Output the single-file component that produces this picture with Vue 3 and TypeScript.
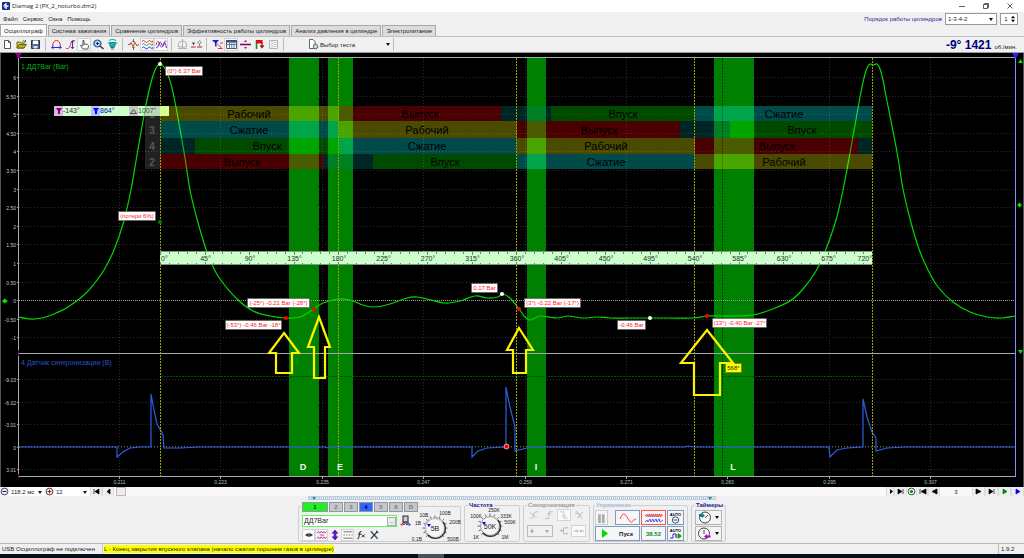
<script setup lang="ts">
import { ref } from 'vue'

interface Stroke { d: string; s?: string; f?: string; w?: number }
interface Tool { label: string; on?: boolean; art: Stroke[] }
interface Cell { kind: string; to: number; text?: string; at?: number }
interface Note { x: number; y: number; w: number; text: string }
type Pt = [number, number]

const menu = ['Файл', 'Сервис', 'Окна', 'Помощь']
const tabs = [
  'Осциллограф',
  'Система зажигания',
  'Сравнение цилиндров',
  'Эффективность работы цилиндров',
  'Анализ давления в цилиндре',
  'Электропитание',
]
const activeTab = ref(0)
const order = ref('1-3-4-2')
const cylinder = ref(1)
const channelName = ref('ДД7Bar')

const toolGroups: Tool[][] = [
  [
    { label: 'Новый', art: [{ d: 'M2.5 1.5H6.5L8.5 3.5V9.5H2.5ZM6.5 1.5V3.5H8.5', s: '#444', f: '#fff' }] },
    { label: 'Открыть', art: [{ d: 'M1 9V3H4L5 4H8V9Z', s: '#6a5a10', f: '#e8d040' }, { d: 'M1 9L3 5.5H10.5L8 9Z', s: '#5a5a10', f: '#b8b020' }, { d: 'M6 2.5Q8 .5 9.5 3M9.5 1V3H8', s: '#208020' }] },
    { label: 'Сохранить', art: [{ d: 'M1.5 1.5H9.5V9.5H1.5Z', s: '#223', f: '#5a6a9a' }, { d: 'M3 1.5H8V5H3Z', f: '#fff' }, { d: 'M3.5 7H7.5V9.5H3.5Z', f: '#dde' }] },
  ],
  [
    { label: 'По горизонтали', art: [{ d: 'M1.5 7.5Q2 1.500 5.500 1.500T9.500 7.500', s: '#f22', w: 1 }, { d: 'M.5 8.500H10.500M2.500 7L.8 8.500L2.500 10M8.500 7L10.200 8.500L8.500 10', s: '#22f', w: 1 }] },
    { label: 'По вертикали', art: [{ d: 'M1 9.5H3Q5 9 5.5 5.5T8 1.5H10', s: '#f22' }, { d: 'M7.5 2V9.5M6 8L7.5 9.7L9 8M6 3.5L7.5 1.8L9 3.5', s: '#22c' }] },
    { label: 'Рука', on: true, art: [{ d: 'M4 10L1.5 6.5L2.5 6L4 7V1.5H5V5L8.5 5.5L9.5 6.5L9 10Z', s: '#444', f: '#fff' }] },
    { label: 'Масштаб', art: [{ d: 'M4.5 1A3.5 3.5 0 1 1 4.4 1Z', s: '#357', f: '#a8d8ff', w: 1.2 }, { d: 'M7 7L10.5 10', s: '#335', w: 1.6 }, { d: 'M3 4.5H6M4.5 3V6', s: '#118' }] },
    { label: 'Лампа', art: [{ d: 'M2.5 3.500H8.500L8 7L7 8H4L3 7Z', f: '#18b4b8', s: '#088' }, { d: 'M2 1.500Q5.500 -.5 9 1.500M.5 4H2M9 4H10.500', s: '#0bb', w: 1.2 }, { d: 'M3.500 8.500H7.500M4 10H7', s: '#556' }] },
  ],
  [
    { label: 'Центрировать', art: [{ d: 'M0 5.5H2L3 3.5L5 7.5L7 3.5L9 7L10 5.5H11', s: '#d22' }, { d: 'M5.5 0V3M4.3 2L5.5 3.2L6.7 2M5.5 11V8M4.3 9L5.5 7.8L6.7 9', s: '#183' }] },
    { label: 'Раздельно', on: true, art: [{ d: 'M0 2.5Q1.5 .5 3 2.5T6 2.5T9 2.5T11 1.5', s: '#d22' }, { d: 'M0 5.5Q1.5 3.5 3 5.5T6 5.5T9 5.5T11 4.5', s: '#292' }, { d: 'M0 9Q1.5 7 3 9T6 9T9 9T11 8', s: '#22f' }] },
    { label: 'Вместе', on: true, art: [{ d: 'M0 6Q1.500 -1 3.500 5T7 6T10.500 2', s: '#d22' }, { d: 'M0 9Q2 9 3 5T5.500 5T8 5T10.500 9', s: '#22f' }] },
  ],
  [
    { label: 'Взвешивание', art: [{ d: 'M1.5 8V5Q1.5 2 5.5 2T9.5 5V8ZM5.5 0V9M1 9.5H10', s: '#aaa' }] },
    { label: 'Разность', art: [{ d: 'M0 8H4.500M6 8H11', s: '#a22', w: 1.2 }, { d: 'M1 4H4M2.500 6V4', s: '#333' }, { d: 'M8.500 2A1.500 1.500 0 1 1 8.400 2ZM8.500 5V7', s: '#777' }] },
  ],
  [
    { label: 'Фильтр', art: [{ d: 'M0 1H7L4.5 4V8L3 7V4Z', f: '#22c' }, { d: 'M5 4.5L10 9.5M8 4H11M6 9.5H10.5', s: '#d22' }] },
    { label: 'Таблица', on: true, art: [{ d: 'M.5 1.5H10.5V9.5H.5Z', s: '#346', f: '#fff' }, { d: 'M.5 2.5H10.5', s: '#347', w: 2 }, { d: 'M3.5 2V9.5M5.8 2V9.5M8 2V9.5M.5 5.5H10.5', s: '#579' }] },
    { label: 'Линия', art: [{ d: 'M0 5.5H11', s: '#808', w: 1.6 }, { d: 'M5.5 1L7 3H4ZM5.5 10L7 8H4Z', f: '#a22' }] },
    { label: 'Флаг', art: [{ d: 'M2.5 1V10', s: '#181', w: 1.5 }, { d: 'M2 1H8.5V4.5H2Z', f: '#d11' }, { d: 'M8 3V8M6.3 6.5L8 8.5L9.7 6.5', s: '#a11', w: 1.3 }] },
    { label: 'Отчёт', art: [{ d: 'M1.5 1.5H9.5V9.5H1.5Z', s: '#aaa', f: '#f8f8f8' }, { d: 'M4 1.5V9.5M5.5 3.5H8.5M5.5 5.5H8.5M5.5 7.5H8.5', s: '#bbb' }] },
  ],
]

const channelTools: Tool[] = [
  { label: 'Показать', on: true, art: [{ d: 'M1 5.5Q5.5 1.5 10 5.5Q5.5 9.5 1 5.5Z', f: '#333' }, { d: 'M5.5 4V7', s: '#888' }] },
  { label: 'Сгладить', on: true, art: [{ d: 'M0 3.5L1.500 1.5L3 3.5L4.500 1.5L6 3.5L7.500 1.5L9 3.500L10.500 1.500M0 9.5L1.500 7.5L3 9.5L4.500 7.5L6 9.5L7.500 7.5L9 9.500L10.500 7.500', s: '#a1a' }, { d: 'M3 5.5H8', s: '#d22' }] },
  { label: 'Инверсия', art: [{ d: 'M5.5 0L8.5 3.5H6.5V7.5H8.5L5.5 11L2.5 7.5H4.5V3.5H2.5Z', f: '#22e', s: '#918' }] },
  { label: 'Линии', on: true, art: [{ d: 'M.5 2H10.500M.5 9H10.500', s: '#555' }, { d: 'M.5 5.5H2M3.500 5.5H5M6.500 5.5H8M9.500 5.500H10.500', s: '#555' }] },
  { label: 'Функция', art: [{ d: 'M6 1.5Q4 1 3.8 4L3 9Q2.5 10 1.5 9.5M2.5 4.5H6M6.5 5L9.5 8M9.5 5L6.5 8', s: '#222', w: 1.1 }] },
  { label: 'Настройка', art: [{ d: 'M2 1.5L9.5 9.5', s: '#456', w: 1.6 }, { d: 'M9.500 1.5L2 9.5M8 1L10 3', s: '#234', w: 1.3 }] },
]

const syncTools: Tool[] = [
  { label: 'Синхронизация по уровню', art: [{ d: 'M1 9H3Q5 9 5 5.5T8 2H10M1 3L8 8', s: '#bbb' }] },
  { label: 'По фронту', art: [{ d: 'M1 9.5H5.5V2H10M3.5 5L5.5 3L7.5 5', s: '#bbb' }] },
  { label: 'По спаду', on: true, art: [{ d: 'M1 2H5.5V9H10M3.5 5.5L5.5 8L7.5 5.5', s: '#c4c4c4' }] },
  { label: 'Отключить', art: [{ d: 'M1 4H5L9 9.5M9.5 2L4 9M2 1L6 5', s: '#b4b4b4' }] },
]
const syncExtra: Tool[] = [
  { label: 'Возврат', art: [{ d: 'M10 2H5V5H1.5M3 3.5L1.5 5L3 6.5M5 5V8.5H10', s: '#b4b4b4' }] },
  { label: 'Сжать', on: true, art: [{ d: 'M0 5.5H4.5M3 4L4.5 5.5L3 7M11 5.5H6.5M8 4L6.5 5.5L8 7', s: '#aaa' }] },
]

/* Catmull-Rom interpolation converted to cubic segments */
function smooth(p: Pt[]): string {
  let d = `M${p[0][0]} ${p[0][1]}`
  for (let i = 0; i < p.length - 1; i++) {
    const a = p[Math.max(0, i - 1)], b = p[i], c = p[i + 1], e = p[Math.min(p.length - 1, i + 2)]
    d += `C${b[0] + (c[0] - a[0]) / 6} ${b[1] + (c[1] - a[1]) / 6} ${c[0] - (e[0] - b[0]) / 6} ${c[1] - (e[1] - b[1]) / 6} ${c[0]} ${c[1]}`
  }
  return d
}

const pressure = smooth([
  [18, 317], [30, 319], [42, 318], [54, 314], [68, 307], [84, 295], [94, 284], [104, 270], [114, 250], [123, 224], [131, 190],
  [137, 155], [143, 121], [148, 95], [152, 79], [156, 68], [160, 64], [164, 67], [169, 78], [174, 97], [184, 152], [190, 190],
  [197, 219], [207, 252], [218, 276], [237, 299], [253, 311],
  [270, 316], [286, 318], [300, 317], [314, 309], [323, 303], [338, 299], [350, 300], [363, 305], [374, 307], [390, 304],
  [407, 298], [417, 297], [427, 299], [445, 303], [460, 301], [475, 296], [488, 298], [498, 297], [502, 294], [510, 298],
  [519, 309], [525, 317], [530, 320], [535, 318], [541, 316], [557, 318], [568, 316], [583, 318], [597, 317], [610, 318],
  [630, 318], [643, 318], [667, 318], [693, 318], [707, 316], [720, 316], [737, 316], [753, 315], [770, 310], [790, 301],
  [803, 289], [816, 271], [826, 249], [836, 220], [843, 190], [850, 153], [860, 97], [864, 78], [867, 68], [870, 64], [873, 65], [877, 64],
  [880, 69], [883, 80], [886, 96], [897, 152], [903, 189], [910, 219], [919, 249], [928, 270], [938, 287], [953, 302], [970, 312], [987, 317],
  [1002, 318], [1015, 316],
])
const sync =
  'M18 447H117V457L123 452L130 448L140 447H151V394L154 410L157 424L161 431L163 435L164 448H180L200 447H325L328 448L340 447H472V457L478 451L487 448L506 447V387L509 403L515 427V451L527 448L540 447H685L688 446L694 447H829L830 457L837 450L847 448L863 447V399L867 417L872 432L876 438V451L887 448L905 447H1015'

const scaleTop = ['6', '5.50', '5', '4.50', '4', '3.50', '3', '2.50', '2', '1.50', '1', '0.50', '0', '-0.50', '-1'].map(
  (text, i) => ({ text, y: Math.round(78 + i * 18.6) - 0.5 }),
)
const scaleBottom = ['-9.03', '-6.02', '-3.01', '0', '3.01'].map((text, i) => ({ text, y: Math.round(379 + i * 22.5) + 0.5 }))
const times = ['0.211', '0.223', '0.235', '0.247', '0.259', '0.271', '0.283', '0.295', '0.307'].map((text, i) => ({
  text,
  x: Math.round(119 + i * 101.4) + 0.5,
}))
const strokes = [160.5, 338.5, 516.5, 694.5, 872.5]
const bands = [
  { x: 289, w: 30, text: 'D', at: 303 },
  { x: 328, w: 25, text: 'E', at: 340 },
  { x: 527, w: 19, text: 'I', at: 536 },
  { x: 714, w: 40, text: 'L', at: 733 },
]

function row(y: number, h: number, n: string, cells: Cell[]) {
  let from = 161
  return { y, h, n, cells: cells.map((c) => { const o = { ...c, from }; from = c.to; return o }) }
}
const phases = [
  row(106, 15, '1', [
    { kind: 'power', to: 339, text: 'Рабочий', at: 249 }, { kind: 'exhaust', to: 501, text: 'Выпуск', at: 420 }, { kind: 'overlap', to: 551 },
    { kind: 'intake', to: 695, text: 'Впуск', at: 623 }, { kind: 'compress', to: 872, text: 'Сжатие', at: 784 }]),
  row(121, 17, '3', [
    { kind: 'compress', to: 339, text: 'Сжатие', at: 249 }, { kind: 'power', to: 517, text: 'Рабочий', at: 427 }, { kind: 'exhaust', to: 680, text: 'Выпуск', at: 599 },
    { kind: 'overlap', to: 730 }, { kind: 'intake', to: 872, text: 'Впуск', at: 802 }]),
  row(138, 16, '4', [
    { kind: 'overlap', to: 195 }, { kind: 'intake', to: 339, text: 'Впуск', at: 267 }, { kind: 'compress', to: 517, text: 'Сжатие', at: 427 },
    { kind: 'power', to: 695, text: 'Рабочий', at: 606 }, { kind: 'exhaust', to: 858, text: 'Выпуск', at: 777 }, { kind: 'overlap', to: 872 }]),
  row(154, 15, '2', [
    { kind: 'exhaust', to: 323, text: 'Выпуск', at: 242 }, { kind: 'overlap', to: 373 }, { kind: 'intake', to: 517, text: 'Впуск', at: 445 },
    { kind: 'compress', to: 695, text: 'Сжатие', at: 606 }, { kind: 'power', to: 872, text: 'Рабочий', at: 784 }]),
]
const degrees = Array.from({ length: 17 }, (_, i) => ({
  text: `${i * 45}°`,
  x: i === 0 ? 161 : i === 16 ? 872 : 161 + i * 44.5,
  anchor: i === 0 ? 'start' : i === 16 ? 'end' : 'middle',
}))
const rulerTicks = Array.from({ length: 80 }, (_, i) => ({ x: Math.round(160 + i * 8.9) + 0.5, h: i % 5 ? 2 : 3 }))

const notes: Note[] = [
  { x: 165, y: 66, w: 37, text: '(0°) 6.37 Bar' },
  { x: 118, y: 211, w: 37, text: '(потери 6%)' },
  { x: 247, y: 298, w: 62, text: '(-25°) -0.21 Bar (-28°)' },
  { x: 225, y: 320, w: 56, text: '(-53°) -0.46 Bar -18°' },
  { x: 471, y: 283, w: 26, text: '0.17 Bar' },
  { x: 524, y: 298, w: 56, text: '(3°) -0.22 Bar (-17°)' },
  { x: 617, y: 320, w: 28, text: '-0.46 Bar' },
  { x: 712, y: 318, w: 54, text: '(13°) -0.40 Bar -27°' },
]
const dots = [
  { x: 160, y: 64, c: '#fff' }, { x: 502, y: 294, c: '#fff' }, { x: 650, y: 318, c: '#fff' },
  { x: 286, y: 318, c: '#f00' }, { x: 314, y: 309, c: '#f00' }, { x: 519, y: 309, c: '#f00' }, { x: 707, y: 316, c: '#f00' },
  { x: 160, y: 222, c: '#008000' },
]
const arrows = [
  'M284 333L299 353H292V373H276V353H269Z',
  'M319 317L330 347H325V378H314V347H308Z',
  'M519 328L533 350H526V373H513V350H507Z',
  'M707 330L733 363H720V395H694V363H681Z',
]

const channels = [
  { n: '1', c: 'green' }, { n: '2', c: '' }, { n: '3', c: '' }, { n: '4', c: 'blue' }, { n: '5', c: '' }, { n: '6', c: '' }, { n: 'D', c: '' },
]
function dial(cx: number, cy: number): string {
  let d = ''
  for (let a = -225; a <= 45; a += 22.5) {
    const c = Math.cos((a * Math.PI) / 180), s = Math.sin((a * Math.PI) / 180)
    d += `M${(cx + c * 10).toFixed(1)} ${(cy + s * 10).toFixed(1)}L${(cx + c * 12.5).toFixed(1)} ${(cy + s * 12.5).toFixed(1)}`
  }
  return d
}
const knobs = {
  volt: { label: '5В', ticks: dial(21, 17), marks: [['0,1В', 3, 28], ['1В', 4, 12], ['10В', 10, 4], ['100В', 31, 2], ['200В', 41, 11], ['500В', 39, 28]] },
  freq: { label: '50K', ticks: dial(22, 17), marks: [['1K', 8, 28], ['100K', 8, 7], ['250K', 26, 1], ['333K', 38, 7], ['500K', 42, 13], ['1M', 37, 28]] },
}
const playLeft = [
  { label: 'В начало', d: 'M2 2V7M7 2V7L3 4.5Z', c: '#000' },
  { label: 'Назад', d: 'M6 2V7L3 4.5Z', c: '#000' },
]
const playRight = [
  { label: 'Кадр назад', d: 'M2 2V7M8 2V7L3 4.5Z', c: '#000' },
  { label: 'Предыдущий', d: 'M7 2V7L2 4.5Z', c: '#000' },
]
const playEnd = [
  { label: 'Следующий', d: 'M2 2V7L7 4.5Z', c: '#000' },
  { label: 'В конец', d: 'M2 2V7L6 4.5ZM7 2V7', c: '#000' },
  { label: 'Воспроизвести', d: 'M3 2V7L7 4.5Z', c: '#080' },
  { label: 'Повтор', d: 'M3 2V7L7 4.5Z', c: '#00f' },
]
</script>

<template>
  <div class="app">
    <header class="title">
      <svg class="logo" viewBox="0 0 8 8"><rect width="8" height="8" rx="1" fill="#1a2a9a" /><path d="M1 4H2L3 2V6L4 1V7L5 3V5L6 4H7" stroke="#fff" fill="none" stroke-width=".8" /></svg>
      <span class="name">Diamag 2 (PX_2_noturbo.dm2)</span>
      <button aria-label="Свернуть"><svg viewBox="0 0 8 8"><path d="M1 4.5H7" /></svg></button>
      <button aria-label="Развернуть"><svg viewBox="0 0 8 8"><path d="M1.5 2.5H5.5V6.5H1.5ZM2.5 2.5V1.5H6.5V5.5H5.5" /></svg></button>
      <button aria-label="Закрыть"><svg viewBox="0 0 8 8"><path d="M1.5 1.5L6.5 6.5M6.5 1.5L1.5 6.5" /></svg></button>
    </header>

    <div class="head">
      <div class="head-left">
        <nav class="menu"><button v-for="m in menu" :key="m">{{ m }}</button></nav>
        <div class="tabs" role="tablist">
          <button v-for="(t, i) in tabs" :key="t" role="tab" :aria-selected="i === activeTab" :class="{ active: i === activeTab }" @click="activeTab = i">{{ t }}</button>
        </div>
      </div>
      <div class="order">
        <label for="order">Порядок работы цилиндров</label>
        <span class="drop"><select id="order" v-model="order"><option>1-3-4-2</option><option>1-2-4-3</option></select></span>
        <span class="spin"><input v-model="cylinder" type="text" aria-label="Цилиндр" /><svg viewBox="0 0 5 8"><path d="M0 3L2.5 0L5 3ZM0 5L2.5 8L5 5Z" /></svg></span>
      </div>
    </div>

    <div class="toolbar">
      <div v-for="(g, i) in toolGroups" :key="i" class="group">
        <button v-for="t in g" :key="t.label" :aria-label="t.label" :class="{ on: t.on }">
          <svg viewBox="0 0 11 11"><path v-for="(a, k) in t.art" :key="k" :d="a.d" :stroke="a.s || 'none'" :fill="a.f || 'none'" :stroke-width="a.w || 0.9" /></svg>
        </button>
      </div>
      <button class="test">
        <svg viewBox="0 0 11 11"><path d="M1.5 .5H5L7 2.5V9.5H1.5Z" fill="#fff" stroke="#555" stroke-width=".9" /><circle cx="7.5" cy="7.5" r="2.2" fill="#cdc" stroke="#465" stroke-width="1.2" stroke-dasharray="1.2 .5" /></svg>
        <span>Выбор теста</span><i class="caret"></i>
      </button>
      <div class="rpm"><b>-9° 1421</b><span>об./мин.</span></div>
    </div>

    <svg class="chart" viewBox="0 53 1024 434" role="img" aria-label="Осциллограмма">
      <rect x="0" y="53" width="1024" height="434" fill="#000" />
      <path d="M.5 53V487M1023.5 53V487" stroke="#555" />
      <g class="grid">
        <path v-for="s in scaleTop" :key="'t' + s.y" :d="`M19 ${s.y}H1015`" />
        <path v-for="s in scaleBottom" :key="'b' + s.y" :d="`M19 ${s.y}H1015`" />
        <path v-for="t in times" :key="t.text" :d="`M${t.x} 58V476`" />
      </g>
      <g>
        <rect v-for="b in bands" :key="b.text" :x="b.x" y="58" :width="b.w" height="418" fill="#008000" />
      </g>
      <path d="M19 300.5H1015" stroke="#999" stroke-dasharray="1 1" />
      <path d="M19 446.5H1015" stroke="#666" stroke-dasharray="1 2" />
      <path d="M161 376.5H872" stroke="#005000" stroke-dasharray="2 1" />
      <path d="M722.5 58V476" stroke="#003800" stroke-dasharray="2 1" />
      <path :d="pressure" class="pressure" />
      <path :d="sync" class="sync" />
      <g v-for="r in phases" :key="r.n">
        <rect x="145" :y="r.y" width="16" :height="r.h" fill="#fff" fill-opacity=".13" />
        <text x="152" :y="r.y + r.h / 2 + 4" class="cyl">{{ r.n }}</text>
        <rect v-for="c in r.cells" :key="c.from" :x="c.from" :y="r.y" :width="c.to - c.from" :height="r.h" :class="c.kind" />
        <template v-for="c in r.cells" :key="'x' + c.from"><text v-if="c.text" :x="c.at" :y="r.y + r.h / 2 + 4" class="phase">{{ c.text }}</text></template>
      </g>
      <path v-for="x in strokes" :key="x" :d="`M${x} 58V476`" stroke="#a0a000" stroke-dasharray="2 1" />

      <rect x="160" y="251" width="712" height="14" fill="#cfc" />
      <path d="M160 251.5H872M160 264.5H872" stroke="#7a9a7a" />
      <path v-for="t in rulerTicks" :key="t.x" :d="`M${t.x} 252v${t.h}M${t.x} 265v-${t.h}`" stroke="#678567" />
      <text v-for="d in degrees" :key="d.text" :x="d.x" y="261" :text-anchor="d.anchor" class="deg">{{ d.text }}</text>

      <rect x="54" y="106" width="91" height="10" fill="#cfc" />
      <rect x="145" y="106" width="15" height="10" fill="#b8d8b8" />
      <rect x="160" y="106" width="9" height="10" fill="#d8ff90" />
      <rect x="54" y="106" width="9" height="10" fill="#d8b8d8" />
      <rect x="91" y="106" width="9" height="10" fill="#b8c0ff" />
      <rect x="129" y="106" width="9" height="10" fill="#c0c8c0" />
      <path d="M144 116L146 106" stroke="#6b6" />
      <path d="M56 108H62L60 111V114H58V111Z" fill="#808" />
      <path d="M93 108H99L97 111V114H95V111Z" fill="#00f" />
      <path d="M130.5 113.5H136.5L133.5 109.5Z" fill="none" stroke="#555" />
      <text x="63" y="113" class="cur" fill="#606">-143°</text>
      <text x="100" y="113" class="cur" fill="#00c">864°</text>
      <text x="138" y="113" class="cur" fill="#353">1007°</text>

      <g stroke="#a8a8a8">
        <path d="M18 57.5H1015M18 353.5H1015M18 476.5H1015" />
        <path d="M18.5 57V477" />
        <path v-for="s in [...scaleTop, ...scaleBottom]" :key="s.y" :d="`M17 ${s.y}H19`" />
        <path v-for="t in times" :key="t.text" :d="`M${t.x} 477V479`" />
      </g>
      <path d="M1015.5 57V477" stroke="#8888ff" />
      <path d="M15 53H22L20 56V58H17V56Z" fill="#808" />
      <path d="M18.5 350V356M18.5 474V478" stroke="#808" />
      <path d="M1012 53H1019L1016 58H1015Z" fill="#22f" />
      <path d="M1018 63H1023L1020.5 59ZM1018 350H1023L1020.5 354ZM1017 205L1019.5 202.5L1022 205L1019.5 207.5ZM2 301L4.5 298.5L8 301L4.5 303.5Z" fill="#00e000" />

      <text v-for="s in scaleTop" :key="'l' + s.y" x="16" :y="s.y + 2" class="scale">{{ s.text }}</text>
      <text v-for="s in scaleBottom" :key="'m' + s.y" x="16" :y="s.y + 2" class="scale">{{ s.text }}</text>
      <text v-for="t in times" :key="'n' + t.text" :x="t.x" y="484" class="time">{{ t.text }}</text>
      <text x="21" y="69" class="chan" fill="#00b41e">1 ДД7Bar (Bar)</text>
      <text x="21" y="365" class="chan" fill="#2a55c8">4 Датчик синхронизации (В)</text>
      <text v-for="b in bands" :key="b.text" :x="b.at" y="470" class="mark">{{ b.text }}</text>

      <circle v-for="d in dots" :key="d.x + d.c" :cx="d.x" :cy="d.y" r="2" :fill="d.c" />
      <circle cx="506.5" cy="446.5" r="2.5" fill="#f00" stroke="#fcc" stroke-width=".8" />
      <g v-for="n in notes" :key="n.text">
        <rect :x="n.x + 0.5" :y="n.y + 0.5" :width="n.w" height="9" fill="#fff" stroke="#555" stroke-width=".6" />
        <text :x="n.x + n.w / 2 + 0.5" :y="n.y + 7" class="note">{{ n.text }}</text>
      </g>
      <rect x="725.5" y="363.5" width="16" height="9" fill="#ff0" stroke="#880" />
      <text x="733.5" y="370" class="note hint">568°</text>
      <path v-for="a in arrows" :key="a" :d="a" fill="none" stroke="#fff200" stroke-width="2.2" />
    </svg>

    <div class="nav">
      <svg viewBox="0 0 9 9"><circle cx="4.5" cy="4.5" r="3.4" fill="#eef" stroke="#335" stroke-width=".9" /><path d="M2.5 4.5H6.5" stroke="#118" /></svg>
      <span class="drop time-step"><select aria-label="Развёртка"><option>118.2 мс</option></select></span>
      <svg viewBox="0 0 9 9"><circle cx="4.5" cy="4.5" r="3.4" fill="#fee" stroke="#433" stroke-width=".9" /><path d="M2.5 4.5H6.5M4.5 2.5V6.5" stroke="#a11" /></svg>
      <span class="drop zoom-step"><select aria-label="Масштаб"><option>12</option></select></span>
      <button v-for="p in playLeft" :key="p.label" :aria-label="p.label"><svg viewBox="0 0 9 9"><path :d="p.d" :fill="p.c" :stroke="p.c" stroke-width=".7" /></svg></button>
      <div class="track"><button class="thumb" aria-label="Прокрутка"></button></div>
      <button class="slim" aria-label="Вперёд"><svg viewBox="0 0 9 9"><path d="M3 2V7L6 4.5Z" /></svg></button>
      <button class="wide" aria-label="В конец записи"><svg viewBox="0 0 9 9"><path d="M2 2V7L6 4.5ZM7 2V7" fill="#000" stroke="#000" stroke-width=".7" /></svg></button>
      <svg viewBox="0 0 9 9"><circle cx="4.5" cy="4.5" r="3.4" fill="#efe" stroke="#333" stroke-width=".9" /><circle cx="4.5" cy="4.5" r="1.6" fill="#080" /></svg>
      <button v-for="p in playRight" :key="p.label" :aria-label="p.label"><svg viewBox="0 0 9 9"><path :d="p.d" :fill="p.c" :stroke="p.c" stroke-width=".7" /></svg></button>
      <span class="frame">3</span>
      <button v-for="p in playEnd" :key="p.label" class="wide" :aria-label="p.label"><svg viewBox="0 0 9 9"><path :d="p.d" :fill="p.c" :stroke="p.c" stroke-width=".7" /></svg></button>
    </div>

    <div class="panel">
      <div class="splitter"><i></i><i></i></div>
      <div class="boxes">
        <fieldset class="channel">
          <legend><button v-for="c in channels" :key="c.n" :class="c.c">{{ c.n }}</button></legend>
          <div class="cols">
            <div class="channel-left">
              <div class="name-row">
                <span class="name-box"><input v-model="channelName" aria-label="Датчик" /><button>...</button></span>
                <svg viewBox="0 0 11 12"><rect x="3" y="1" width="5" height="6" fill="#ccc" stroke="#222" /><path d="M2 8H9" stroke="#222" /><path d="M0 9.5L2.5 8V11Z" fill="#f22" /><path d="M3 9.5H5" stroke="#f22" /><path d="M11 9.5L8.5 8V11Z" fill="#22f" /><path d="M6 9.5H8" stroke="#22f" /></svg>
              </div>
              <div class="icons">
                <button v-for="t in channelTools" :key="t.label" :aria-label="t.label" :class="{ on: t.on }">
                  <svg viewBox="0 0 11 11"><path v-for="(a, k) in t.art" :key="k" :d="a.d" :stroke="a.s || 'none'" :fill="a.f || 'none'" :stroke-width="a.w || 0.9" /></svg>
                </button>
              </div>
            </div>
            <svg class="knob" viewBox="0 0 46 31">
              <path :d="knobs.volt.ticks" stroke="#444" stroke-width=".8" />
              <circle cx="21" cy="17" r="10" fill="#e8e8e8" stroke="#aaa" stroke-width="2" stroke-dasharray="2 1" />
              <path d="M29 11A9.500 9.500 0 0 1 14 24" fill="none" stroke="#333" stroke-width="1.4" />
              <circle cx="21" cy="17" r="8.500" fill="#f4f4f4" />
              <path d="M13 13H17L15 16Z" fill="#00f" />
              <text x="21" y="19.500" class="big">{{ knobs.volt.label }}</text>
              <text v-for="m in knobs.volt.marks" :key="m[0]" :x="m[1]" :y="Number(m[2]) + 2">{{ m[0] }}</text>
            </svg>
          </div>
        </fieldset>

        <fieldset class="freq">
          <legend>Частота</legend>
          <svg class="knob" viewBox="0 0 46 31">
            <path :d="knobs.freq.ticks" stroke="#444" stroke-width=".8" />
            <circle cx="22" cy="17" r="9.500" fill="#e8e8e8" stroke="#999" stroke-width="1" />
            <path d="M30 11A9.500 9.500 0 0 1 15 24" fill="none" stroke="#333" stroke-width="1.400" />
            <circle cx="22" cy="17" r="8.500" fill="#f4f4f4" />
            <path d="M14 13H18L16 16Z" fill="#00f" />
            <text x="22" y="19.500" class="big">{{ knobs.freq.label }}</text>
            <text v-for="m in knobs.freq.marks" :key="m[0]" :x="m[1]" :y="Number(m[2]) + 2">{{ m[0] }}</text>
          </svg>
        </fieldset>

        <fieldset class="sync-box">
          <legend>Синхронизация</legend>
          <div class="icons">
            <button v-for="t in syncTools" :key="t.label" :aria-label="t.label" :class="{ on: t.on }">
              <svg viewBox="0 0 11 11"><path v-for="(a, k) in t.art" :key="k" :d="a.d" :stroke="a.s" fill="none" /></svg>
            </button>
          </div>
          <div class="icons second">
            <span class="drop source"><select aria-label="Канал синхронизации"><option>4</option></select></span>
            <button v-for="t in syncExtra" :key="t.label" :aria-label="t.label" :class="{ on: t.on }">
              <svg viewBox="0 0 11 11"><path v-for="(a, k) in t.art" :key="k" :d="a.d" :stroke="a.s" fill="none" /></svg>
            </button>
          </div>
        </fieldset>

        <fieldset class="control">
          <legend>Управление</legend>
          <div class="pads">
            <button class="pause" aria-label="Пауза"><svg viewBox="0 0 8 11"><path d="M1 2H3.500V10H1ZM4.500 2H7V10H4.500Z" fill="#aaa" /></svg></button>
            <button aria-label="Синус"><svg viewBox="0 0 22 12"><path d="M3 7Q6-2 10 5T15 10T19 7" fill="none" stroke="#f33" stroke-width=".9" /></svg></button>
            <button class="red" aria-label="Два сигнала"><svg viewBox="0 0 22 12"><path d="M2 3L4 5V2L6 5V2L8 5V2L10 5V2L12 5V2L14 5V2L16 5V2L18 5V2L20 4" fill="none" stroke="#d33" stroke-width=".8" /><path d="M2 10L4 8L5 10L7 7L8 10L10 7L11 10L13 7L14 10L16 7L17 10L20 8" fill="none" stroke="#33e" stroke-width=".8" /></svg></button>
            <button aria-label="Авто масштаб"><svg viewBox="0 0 15 12"><text x="7.500" y="4" class="auto">AUTO</text><circle cx="7.500" cy="8" r="3.200" fill="#fff" stroke="#357" /><path d="M5.500 8H9.500" stroke="#357" /></svg></button>
            <button class="run"><svg viewBox="0 0 6 9"><path d="M0 0V9L6 4.500Z" fill="#0d0" /></svg><span>Пуск</span></button>
            <button class="value">38.52</button>
            <button aria-label="Авто синхронизация"><svg viewBox="0 0 15 12"><text x="7.500" y="4" class="auto">AUTO</text><path d="M2 10H5V6H8V10" fill="none" stroke="#22c" /><path d="M9 6V10" stroke="#c22" /><path d="M10 5V11L14 8Z" fill="#0a0" /></svg></button>
          </div>
        </fieldset>

        <fieldset class="timers">
          <legend>Таймеры</legend>
          <button aria-label="Таймер запуска"><svg viewBox="0 0 13 13"><circle cx="7" cy="6.500" r="5.500" fill="#f8f8f8" stroke="#444" /><path d="M7 7L10 4" stroke="#444" /><path d="M1 3H4V2L7 4.500L4 7V6H1Z" fill="#088" /></svg><i class="caret"></i></button>
          <button aria-label="Таймер остановки"><svg viewBox="0 0 13 13"><circle cx="6" cy="6.500" r="5.500" fill="#f8f8f8" stroke="#444" /><path d="M6 7V3" stroke="#444" /><path d="M6 9.500L9 7V12ZM9 8.500H12.500V10.500H9Z" fill="#b0b" /></svg><i class="caret"></i></button>
        </fieldset>
      </div>
    </div>

    <footer class="status">
      <span class="usb">USB Осциллограф не подключен</span>
      <span class="msg"><mark>L - Конец закрытия впускного клапана (начало сжатия поршнем газов в цилиндре)</mark></span>
      <span class="ver">1.9.2</span>
    </footer>
    <div class="taskbar"><i></i></div>
  </div>
</template>

<style>
body { margin: 0; background: #f0f0f0; }
</style>

<style scoped>
.app { display: flex; flex-direction: column; min-height: 100vh; background: #f0f0f0; color: #222; font: 6px/8px "Liberation Sans", Arial, sans-serif; overflow: hidden; }
.app * { box-sizing: border-box; }
button, select, input { font: inherit; color: inherit; margin: 0; padding: 0; border: 0; background: none; }
svg { display: block; overflow: visible; }

.title { display: flex; align-items: center; height: 12px; background: #fff; padding: 0 2px; }
.logo { width: 8px; height: 8px; }
.name { flex: 1; padding-left: 2px; font-family: "Open Sans", sans-serif; }
.title button { width: 24px; display: grid; place-items: center; }
.title button svg { width: 8px; height: 8px; fill: none; stroke: #333; stroke-width: 0.8; }

.head { display: flex; justify-content: space-between; height: 25px; border-bottom: 1px solid #c0c0c0; }
.head-left { display: flex; flex-direction: column; justify-content: space-between; }
.menu { display: flex; gap: 5px; padding: 3px 3px 0; }
.tabs { display: flex; align-items: flex-end; gap: 1px; }
.tabs button { height: 11px; padding: 0 3px; background: #dcdcdc; border: 1px solid #a8a8a8; border-bottom: 0; white-space: nowrap; }
.tabs .active { height: 12px; background: #fafafa; }
.order { display: flex; align-items: flex-start; gap: 3px; padding: 1px 6px 0 0; color: #223; }
.order label { color: #2a2a90; line-height: 12px; }
.order .drop { width: 52px; height: 12px; background: #fff; border: 1px solid #999; }
.drop { position: relative; display: inline-flex; align-items: center; }
.drop select { appearance: none; width: 100%; padding-left: 2px; line-height: 8px; }
.drop::after, .caret { content: ""; border: 2px solid transparent; border-top: 3px solid #111; border-bottom: 0; }
.drop::after { position: absolute; right: 3px; top: 50%; margin-top: -1px; }
.spin { display: flex; align-items: center; width: 18px; height: 12px; background: #fff; border: 1px solid #999; padding-right: 2px; }
.spin input { width: 100%; min-width: 0; text-align: center; }
.spin svg { width: 4px; height: 8px; flex: none; }

.toolbar { display: flex; align-items: center; height: 16px; border-bottom: 1px solid #999; }
.group { display: flex; padding-right: 3px; margin-right: 3px; border-right: 1px solid #bbb; }
.group button { width: 14px; height: 13px; display: grid; place-items: center; }
.group svg { width: 11px; height: 11px; }
.on { background: #fafafa; outline: 1px solid #d4d4d4; outline-offset: -1px; }
.test { display: flex; align-items: center; gap: 1px; width: 86px; height: 13px; margin-left: 21px; border-right: 1px solid #bbb; padding-right: 3px; }
.test svg { width: 11px; height: 11px; }
.test .caret { margin-left: auto; }
.rpm { margin-left: auto; padding-right: 7px; display: flex; align-items: baseline; gap: 3px; }
.rpm b { font: bold 12px/14px "Liberation Sans", sans-serif; color: #000080; }

.chart { width: 100%; height: auto; font-family: "Liberation Sans", Arial, sans-serif; }
.grid path { stroke: #2c2c2c; stroke-dasharray: 1 2; }
.pressure { fill: none; stroke: #00d800; stroke-width: 1.2; }
.sync { fill: none; stroke: #2c5fe0; stroke-width: 1.2; }
.power { fill: rgba(255, 255, 0, 0.29); }
.compress { fill: rgba(0, 255, 255, 0.29); }
.intake { fill: rgba(0, 255, 0, 0.29); }
.exhaust { fill: rgba(255, 0, 0, 0.29); }
.overlap { fill: rgba(0, 128, 128, 0.29); }
.phase { font-size: 11px; text-anchor: middle; fill: #000; }
.cyl { font-size: 10px; font-weight: bold; text-anchor: middle; fill: #585858; }
.deg { font-size: 7px; fill: #232; }
.cur { font-size: 7px; }
.scale { font-size: 5px; text-anchor: end; fill: #c8c8c8; }
.time { font-size: 5px; text-anchor: middle; fill: #a8c8a8; }
.chan { font-size: 7px; }
.mark { font-size: 9px; font-weight: bold; text-anchor: middle; fill: #e8ffe8; }
.note { font-size: 6px; text-anchor: middle; fill: #f22; }
.hint { fill: #220; }

.nav { display: flex; align-items: center; height: 9px; background: #f8f8f8; }
.nav > svg { width: 9px; height: 9px; flex: none; }
.nav .drop { background: #fff; height: 9px; }
.time-step, .zoom-step { width: 36px; }
.nav button { width: 12px; height: 9px; display: grid; place-items: center; background: #eee; border: 1px solid #ddd; border-width: 0 1px; flex: none; }
.nav button svg { width: 9px; height: 9px; }
.nav .slim { width: 8px; }
.nav .wide { width: 13px; }
.track { flex: 1; padding-left: 2px; }
.nav .thumb { border: 1px solid #bbb; width: 10px; }
.frame { width: 32px; text-align: center; }

.panel { flex: 1; display: flex; flex-direction: column; align-items: center; }
.splitter { width: 408px; height: 4px; display: flex; justify-content: space-between; background: repeating-linear-gradient(90deg, #a8cce8 0 1px, #e4eef6 1px 2px); border: 1px solid #c4ccd4; padding: 0 3px; }
.splitter i { border: 2px solid transparent; border-top: 3px solid #28c; border-bottom: 0; }
.boxes { display: flex; gap: 3px; padding-top: 2px; height: 42px; }
fieldset { margin: 0; padding: 0 3px; border: 1px solid #cfcfcf; border-radius: 2px; min-width: 0; height: 40px; }
legend { padding: 0 1px; font-weight: bold; line-height: 7px; height: 7px; }
.channel { width: 163px; padding: 0 0 0 3px; }
.channel legend { display: flex; gap: 1px; height: 9px; padding: 0; }
.channel legend button { width: 14px; height: 10px; background: #c4c8cc; color: #777; border: 1px solid #8c98a4; line-height: 8px; }
.channel legend .green { width: 26px; background: #2e2; color: #040; }
.channel legend .blue { background: #36f; color: #002; }
.cols { display: flex; justify-content: space-between; }
.channel-left { padding-top: 4px; }
.name-row { display: flex; gap: 3px; }
.name-row > svg { width: 11px; height: 12px; }
.name-box { display: flex; width: 95px; height: 12px; background: #fff; border: 1px solid #6e6; align-items: center; }
.name-box input { flex: 1; min-width: 0; padding-left: 1px; font-size: 7px; }
.name-box button { width: 9px; height: 9px; background: #eee; border: 1px solid #aaa; line-height: 4px; }
.icons { display: flex; }
.icons button { width: 13px; height: 12px; display: grid; place-items: center; }
.icons svg { width: 10px; height: 10px; }
.channel .icons { padding-top: 2px; }
.knob { width: 46px; height: 31px; flex: none; }
.knob text { font: 5px "Liberation Sans", sans-serif; text-anchor: middle; fill: #222; }
.knob .big { font-size: 7px; }
.freq { width: 56px; }
.freq legend, .timers legend { color: #1a1a90; }
.sync-box { width: 67px; }
.sync-box legend { color: #999; }
.sync-box .icons button { width: 15px; }
.sync-box .second { padding-top: 4px; }
.source { width: 26px; height: 12px; border: 1px solid #bbb; margin-right: 4px; color: #777; }
.source::after { border-top-color: #aaa; }
.control { width: 95px; padding: 1px 1px 0; }
.control legend { color: #a0bcd8; }
.pads { display: grid; grid-template-columns: 13px 5px 25px 25px 17px; column-gap: 1px; row-gap: 1px; }
.pads button { height: 15px; background: #f4f6f8; border: 1px solid #7f9db9; display: flex; align-items: center; justify-content: center; }
.pads svg { height: 12px; }
.pads .pause { grid-column: 1 / 2; border-color: #ccc; }
.pads .pause + button { grid-column: 3; }
.pads .red { border-color: #f55; }
.pads .run { grid-column: 1 / 4; font-weight: bold; gap: 11px; }
.pads .run svg { width: 6px; height: 9px; }
.pads .value { color: #183; font-weight: bold; }
.auto { font: bold 4px "Liberation Sans", sans-serif; text-anchor: middle; }
.timers { width: 35px; padding-top: 1px; }
.timers button { width: 27px; height: 15px; display: flex; align-items: center; justify-content: space-around; border: 1px solid #b4b4b4; background: #f4f4f4; margin-bottom: 1px; }
.timers button svg { width: 13px; height: 13px; }

.status { display: flex; height: 11px; line-height: 10px; border-top: 1px solid #b8b8b8; background: #f0f0f0; }
.usb { width: 103px; padding-left: 2px; border-right: 1px solid #ccc; }
.msg { flex: 1; padding-left: 1px; }
.msg mark { background: #ff0; color: #220; display: inline-block; line-height: 8px; }
.ver { width: 26px; padding-left: 2px; border-left: 1px solid #bbb; }
.taskbar { height: 4px; background: #06101a; display: flex; justify-content: center; }
.taskbar i { width: 26px; margin-right: 162px; background: #4a5058; }
</style>
